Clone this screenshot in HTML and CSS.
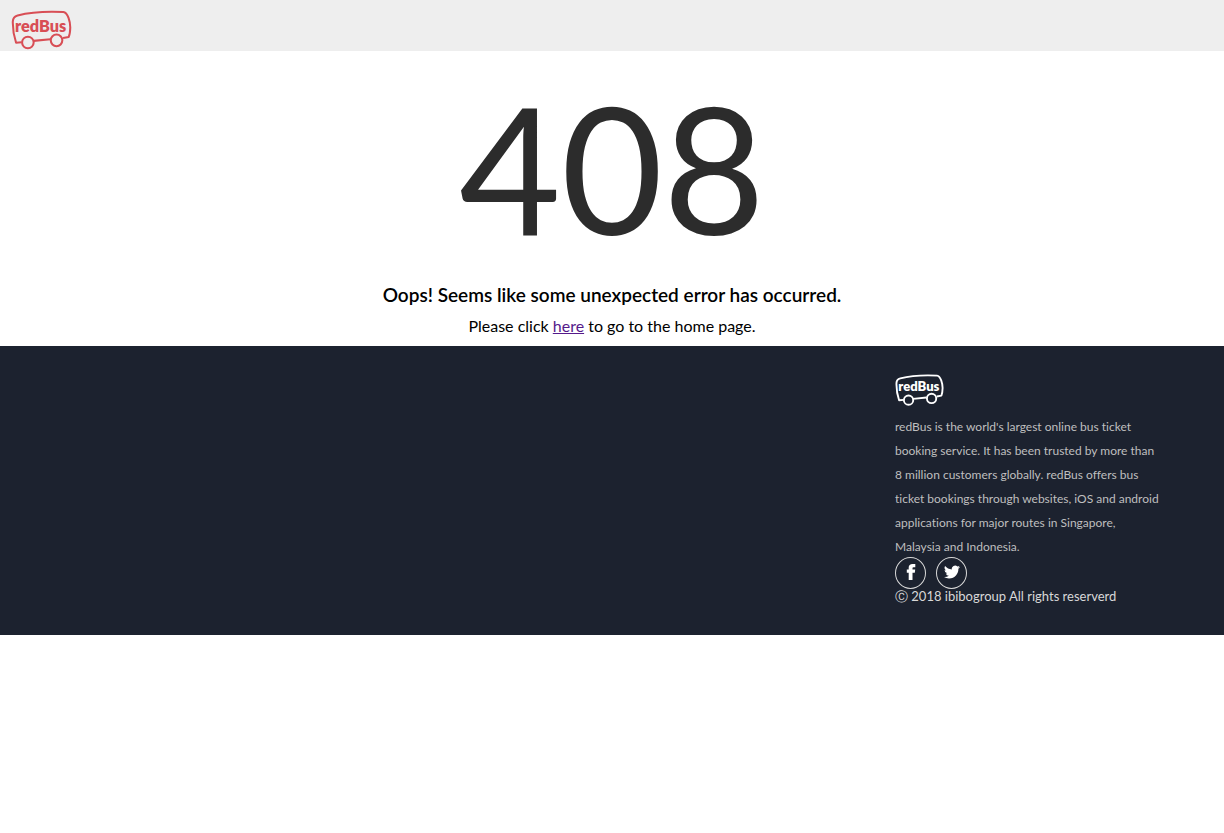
FILE: index.html
```html
<!DOCTYPE html>
<html lang="en">
<head>
<meta charset="utf-8">
<meta name="viewport" content="width=device-width, initial-scale=1">
<title>redBus</title>
<link rel="stylesheet" href="styles.css">
</head>
<body>
<header class="site-header">
  <a class="brand" href="#" aria-label="redBus home">
    <svg class="logo logo-red" viewBox="0 0 60 40" aria-hidden="true">
      <g fill="none" stroke="currentColor" stroke-width="2" stroke-linejoin="round">
        <path d="M10.5 31.5L5 32C3 26 1.600 18 1.800 11C1.900 7.500 3.500 6 6.500 5.200C20 1.700 35 1 51.500 1.800C56 2.200 58.300 12 58.300 17C58.200 21 57.800 24 56.800 26.300L51.200 27.300"/>
        <path d="M22.200 30.200L38.700 28.600"/>
        <circle cx="16.600" cy="31.800" r="5.700"/>
        <circle cx="44.800" cy="29.700" r="5.700"/>
      </g>
      <text class="logo-text" x="4" y="21">redBus</text>
    </svg>
  </a>
</header>
<main class="error">
  <h1 class="error-code">408</h1>
  <h2 class="error-title">Oops! Seems like some unexpected error has occurred.</h2>
  <p class="error-help">Please click <a class="home-link" href="#">here</a> to go to the home page.</p>
</main>
<footer class="site-footer">
  <div class="about">
    <svg class="logo logo-white" viewBox="0 0 60 40" role="img" aria-label="redBus">
      <g fill="none" stroke="currentColor" stroke-width="2.300" stroke-linejoin="round">
        <path d="M10.5 31.5L5 32C3 26 1.600 18 1.800 11C1.900 7.500 3.500 6 6.500 5.200C20 1.700 35 1 51.500 1.800C56 2.200 58.300 12 58.300 17C58.200 21 57.800 24 56.800 26.300L51.200 27.300"/>
        <path d="M22.200 30.200L38.700 28.600"/>
        <circle cx="16.600" cy="31.800" r="5.700"/>
        <circle cx="44.800" cy="29.700" r="5.700"/>
      </g>
      <text class="logo-text" x="4" y="21">redBus</text>
    </svg>
    <p class="about-text">redBus is the world's largest online bus ticket booking service. It has been trusted by more than 8 million customers globally. redBus offers bus ticket bookings through websites, iOS and android applications for major routes in Singapore, Malaysia and Indonesia.</p>
    <div class="social">
      <a class="social-link" href="#" aria-label="Facebook">
        <svg class="social-icon" viewBox="0 0 16 16" aria-hidden="true"><path fill="currentColor" d="M5.700 16V8.700H3.800V5.400H5.700V3.500C5.700 1.200 7.200 0 9.500 0H12.300V3.200H10.500C9.800 3.200 9.500 3.500 9.500 4.100V5.400H12.200L11.800 8.700H9.500V16Z"/></svg>
      </a>
      <a class="social-link" href="#" aria-label="Twitter">
        <svg class="social-icon" viewBox="0 0 24 24" aria-hidden="true"><path fill="currentColor" d="M23.950 4.570a10 10 0 0 1-2.820.770 4.960 4.960 0 0 0 2.160-2.720c-.950.550-2 .960-3.130 1.180a4.920 4.920 0 0 0-8.380 4.480C7.690 8.090 4.070 6.130 1.640 3.160a4.920 4.920 0 0 0 1.520 6.570 4.900 4.900 0 0 1-2.230-.610v.060a4.920 4.920 0 0 0 3.950 4.830 5 5 0 0 1-2.210.080 4.940 4.940 0 0 0 4.600 3.420A9.870 9.870 0 0 1 0 19.540a14 14 0 0 0 7.550 2.210c9.050 0 14-7.500 14-13.980 0-.210 0-.420-.020-.630a9.900 9.900 0 0 0 2.420-2.570z"/></svg>
      </a>
    </div>
    <p class="copyright">Ⓒ 2018 ibibogroup All rights reserverd</p>
  </div>
</footer>
</body>
</html>
```
FILE: styles.css
```css
* {
  box-sizing: border-box;
}

body {
  margin: 0;
  background: #fff;
  color: #000;
  font-family: Lato, sans-serif;
  font-size: 16px;
  font-variant-ligatures: no-common-ligatures;
}

h1,
h2,
p {
  margin: 0;
}

.site-header {
  padding: 10px 11px 0;
  background: #eee;
}

.brand {
  display: inline-block;
  vertical-align: top;
}

.logo {
  display: block;
}

.logo-red {
  width: 61px;
  height: 41px;
  color: #d84e55;
}

.logo-white {
  width: 49px;
  height: 33px;
  color: #fff;
}

.logo-text {
  fill: currentColor;
  font-size: 16px;
  font-weight: 800;
}

.error {
  padding: 8px 16px 10px;
  text-align: center;
}

.error-code {
  color: #2c2c2c;
  font-size: 176px;
  font-weight: 400;
  line-height: 216px;
}

.error-title {
  margin-top: 8px;
  font-size: 19px;
  font-weight: 600;
  line-height: 24px;
}

.error-help {
  margin-top: 9px;
  line-height: 20px;
}

.home-link {
  color: #551a8b;
}

.site-footer {
  display: flex;
  justify-content: flex-end;
  padding: 28px 64px 31px;
  background: #1c222f;
}

.about {
  width: 265px;
}

.about-text {
  margin: 8px 0 -2px;
  color: #bfbfbf;
  font-size: 12px;
  line-height: 24px;
}

.social {
  display: flex;
  gap: 10px;
}

.social-link {
  display: flex;
  align-items: center;
  justify-content: center;
  width: 31px;
  height: 32px;
  padding-bottom: 2px;
  border: 1px solid #d8d8d8;
  border-radius: 50%;
  color: #fff;
}

.social-icon {
  width: 16px;
  height: 16px;
}

.copyright {
  color: #d8d8d8;
  font-size: 13px;
  line-height: 15px;
}
```
